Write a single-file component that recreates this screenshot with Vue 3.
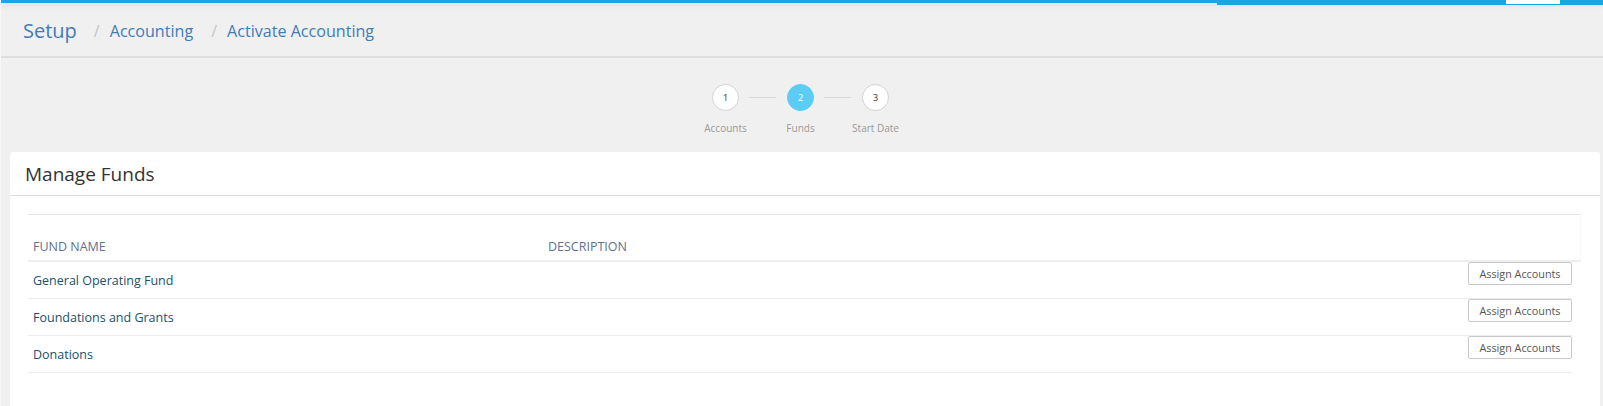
<script setup>
const steps = [
  { num: 1, label: 'Accounts' },
  { num: 2, label: 'Funds', active: true },
  { num: 3, label: 'Start Date' }
]

const funds = ['General Operating Fund', 'Foundations and Grants', 'Donations']
</script>

<template>
  <div class="page">
    <div class="topbar">
      <div class="topbar-right">
        <div class="topbar-tab"></div>
      </div>
    </div>

    <div class="crumbs">
      <span class="crumb-main">Setup</span>
      <span class="crumb-sep">/</span>
      <span class="crumb">Accounting</span>
      <span class="crumb-sep">/</span>
      <span class="crumb">Activate Accounting</span>
    </div>

    <div class="steps">
      <template v-for="(step, index) in steps" :key="step.num">
        <div v-if="index > 0" class="step-line"></div>
        <div class="step">
          <div class="step-circle" :class="{ active: step.active }">{{ step.num }}</div>
          <div class="step-label">{{ step.label }}</div>
        </div>
      </template>
    </div>

    <div class="card">
      <div class="card-title">Manage Funds</div>
      <div class="card-body">
        <div class="table-head">
          <div class="col-name">FUND NAME</div>
          <div class="col-desc">DESCRIPTION</div>
        </div>
        <div v-for="fund in funds" :key="fund" class="fund-row">
          <div class="fund-name">{{ fund }}</div>
          <button class="assign-btn">Assign Accounts</button>
        </div>
      </div>
    </div>
  </div>
</template>

<style>
html,
body {
  margin: 0;
  background: #f0f0f0;
  overflow: hidden;
}
</style>

<style scoped>
.page {
  height: 406px;
  box-sizing: border-box;
  padding-left: 1px;
  background: #f0f0f0;
  border-left: 1px solid #f8f8f8;
  font-family: "Open Sans", "Noto Sans", sans-serif;
  overflow: hidden;
  display: flex;
  flex-direction: column;
}

.topbar {
  position: relative;
  height: 3px;
  margin-left: -2px;
  background: #18a7e0;
  box-shadow: 0 2px 6px rgba(0, 0, 0, 0.12);
}

.topbar-right {
  position: absolute;
  top: 0;
  left: 1217px;
  right: 0;
  height: 5px;
  background: #18a7e0;
}

.topbar-tab {
  position: absolute;
  top: 0;
  left: 289px;
  width: 54px;
  height: 4px;
  background: #fff;
}

.crumbs {
  height: 55px;
  box-sizing: border-box;
  padding-left: 22px;
  padding-top: 2px;
  margin-left: -1px;
  display: flex;
  align-items: center;
  border-bottom: 2px solid #dedede;
  color: #3f7cb8;
}

.crumb-main {
  font-size: 20px;
  margin-right: 17px;
}

.crumb {
  font-size: 16.1px;
}

.crumb-sep {
  font-size: 16px;
  color: #c4c4c4;
  margin-right: 10px;
}

.crumb + .crumb-sep {
  margin-left: 18px;
}

.steps {
  height: 94px;
  box-sizing: border-box;
  padding-top: 26px;
  padding-right: 4px;
  display: flex;
  justify-content: center;
  align-items: flex-start;
}

.step {
  width: 27px;
  display: flex;
  flex-direction: column;
  align-items: center;
}

.step-circle {
  width: 27px;
  height: 27px;
  box-sizing: border-box;
  border: 1px solid #d2d2d2;
  border-radius: 50%;
  background: #fff;
  color: #333;
  font-size: 9px;
  display: flex;
  align-items: center;
  justify-content: center;
}

.step-circle.active {
  background: #5bcdf5;
  border-color: #5bcdf5;
  color: #fff;
}

.step-label {
  margin-top: 10px;
  font-size: 10px;
  line-height: 14px;
  color: #9a9a9a;
  white-space: nowrap;
}

.step-line {
  width: 27px;
  height: 1px;
  margin: 13px 11px 0 10px;
  background: #d8d8d8;
}

.card {
  flex: 1;
  margin: 0 3px 0 8px;
  background: #fff;
  border-radius: 3px 3px 0 0;
}

.card-title {
  height: 44px;
  box-sizing: border-box;
  padding-left: 15px;
  display: flex;
  align-items: center;
  font-size: 19px;
  color: #333;
  border-bottom: 1px solid #dedede;
}

.card-body {
  padding: 18px 28px 0 18px;
}

.table-head {
  height: 48px;
  box-sizing: border-box;
  margin-right: -9px;
  display: flex;
  align-items: center;
  padding-top: 18px;
  padding-left: 5px;
  font-size: 12.5px;
  color: #5f7191;
  border-top: 1px solid #e6e6e6;
  border-right: 1px solid #f8f8f8;
  border-bottom: 2px solid #eeeeee;
}

.col-name {
  width: 515px;
}

.fund-row {
  height: 37px;
  box-sizing: border-box;
  padding-left: 5px;
  display: flex;
  align-items: flex-start;
  justify-content: space-between;
  border-bottom: 1px solid #ececec;
}

.fund-name {
  margin-top: 10px;
  font-size: 12.5px;
  color: #21506e;
}

.assign-btn {
  width: 104px;
  height: 23px;
  padding: 0;
  background: #fff;
  border: 1px solid #c9c9c9;
  border-radius: 2px;
  font-family: inherit;
  font-size: 10.8px;
  color: #555;
}

.fund-row:first-of-type .assign-btn {
  margin-top: 1px;
}
</style>
